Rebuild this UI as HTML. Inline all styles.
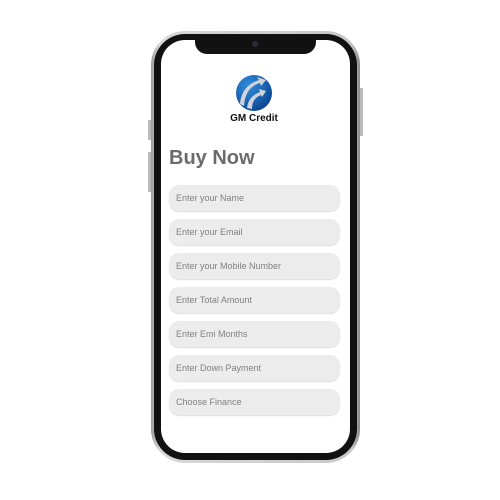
<!DOCTYPE html>
<html><head><style>
body{margin:0;width:500px;height:500px;background:#fff;position:relative;overflow:hidden;font-family:"Liberation Sans",sans-serif}
.phone{position:absolute;left:151px;top:31px;width:209px;height:432px;border-radius:34px;background:linear-gradient(90deg,#9a9a9a,#d8d8d8 4%,#c8c8c8 96%,#8a8a8a);box-sizing:border-box}
.bezel{position:absolute;left:3px;top:3px;right:3px;bottom:3px;border-radius:31px;background:#111}
.screen{position:absolute;left:10px;top:9px;width:189px;height:413px;border-radius:24px;background:#fff;overflow:hidden}
.notch{position:absolute;left:34px;top:-1px;width:121px;height:15px;background:#111;border-radius:0 0 12px 12px}
.cam{position:absolute;width:6px;height:6px;border-radius:50%;background:#2a2a3a}
.btn{position:absolute;background:#bbb;width:3px}
.field{position:absolute;left:169px;width:171px;height:26px;border-radius:10px;background:#ececec;box-shadow:0 1px 1px #ddd;font-size:9px;color:#808080;line-height:26px;padding-left:7px;box-sizing:border-box}
</style></head><body>
<div class="btn" style="left:148px;top:120px;height:20px"></div>
<div class="btn" style="left:148px;top:152px;height:40px"></div>
<div class="btn" style="left:360px;top:88px;height:48px"></div>
<div class="phone"><div class="bezel"></div><div class="screen"><div class="notch"></div></div></div>
<div class="cam" style="left:252px;top:41px"></div>
<svg style="position:absolute;left:235px;top:74px" width="38" height="38" viewBox="0 0 38 38">
<defs><radialGradient id="g" cx="0.35" cy="0.3" r="0.8"><stop offset="0" stop-color="#2f8fe0"/><stop offset="1" stop-color="#0a3f8a"/></radialGradient></defs>
<circle cx="19" cy="19" r="18" fill="url(#g)"/>
<path d="M5 30 C6 18 12 10 24 6 L22 3 L31 6 L26 12 L25 9 C15 12 10 19 9 32 Z" fill="#d0d4da"/>
<path d="M12 34 C13 26 17 21 25 18 L24 15 L31 17 L27 23 L26 21 C20 23 17 28 17 35 Z" fill="#d0d4da"/>
</svg>
<div style="position:absolute;left:204px;width:100px;top:113px;text-align:center;font-weight:bold;font-size:10px;color:#111">GM Credit</div>
<div style="position:absolute;left:169px;top:147px;font-weight:bold;font-size:20px;color:#6b6b6b">Buy Now</div>
<div class="field" style="top:185px">Enter your Name</div>
<div class="field" style="top:219px">Enter your Email</div>
<div class="field" style="top:253px">Enter your Mobile Number</div>
<div class="field" style="top:287px">Enter Total Amount</div>
<div class="field" style="top:321px">Enter Emi Months</div>
<div class="field" style="top:355px">Enter Down Payment</div>
<div class="field" style="top:389px">Choose Finance</div>
</body></html>
